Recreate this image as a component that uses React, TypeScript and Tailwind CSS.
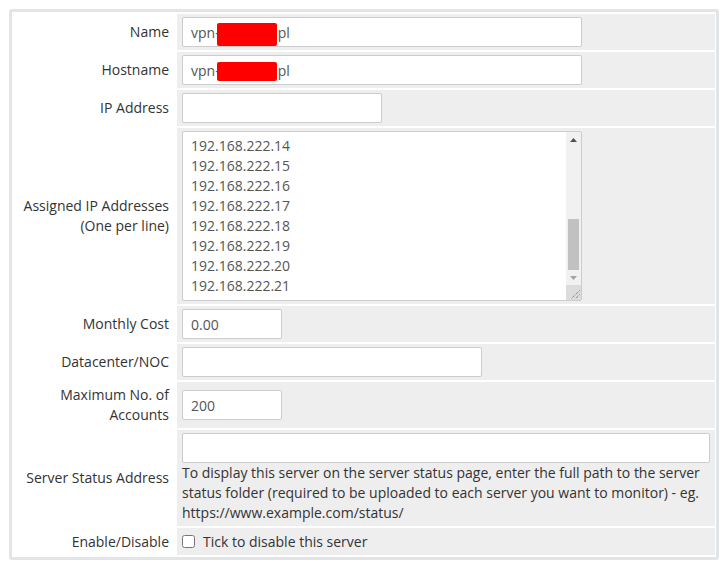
import { useLayoutEffect, useRef, type ReactNode } from "react";

const ips = Array.from({ length: 21 }, (_, i) => `192.168.222.${i + 1}`).join("\n");

const Row = ({ label, children }: { label: ReactNode; children: ReactNode }) => (
  <>
    <div className="flex items-center justify-end pr-[6px] text-right leading-[20px] text-[#333]">
      <div>{label}</div>
    </div>
    <div className="bg-[#eeeeee] px-[5px] py-[3px]">{children}</div>
  </>
);

const inputCls =
  "block h-[30px] rounded-[2px] border border-[#cccccc] bg-white px-[8px] text-[14px] text-[#555] outline-none";

const Redacted = ({ h, shift }: { h: string; shift: string }) => (
  <div className={`${inputCls} flex w-[400px] items-center`}>
    <span>vpn-</span>
    <span className={`-ml-[3px] inline-block w-[60px] rounded-[2px] bg-[#ff0000] ${h} ${shift}`} />
    <span className="ml-[1px]">pl</span>
  </div>
);

// drawn scrollbar, the headless browser hides the native one
const Scrollbar = () => (
  <div className="pointer-events-none absolute bottom-[1px] right-[1px] top-[1px] flex w-[15px] flex-col">
    <div className="flex h-[15px] items-center justify-center bg-[#f1f1f1]">
      <svg width="7" height="4" viewBox="0 0 7 4">
        <path d="M3.5 0L7 4H0z" fill="#505050" />
      </svg>
    </div>
    <div className="flex flex-1 flex-col justify-end bg-[#f1f1f1] px-[2px]">
      <div className="h-[51px] bg-[#c1c1c1]" />
    </div>
    <div className="flex h-[15px] items-center justify-center bg-[#f1f1f1]">
      <svg width="7" height="4" viewBox="0 0 7 4">
        <path d="M0 0H7L3.5 4z" fill="#a3a3a3" />
      </svg>
    </div>
    <div className="h-[15px] bg-[#dcdcdc]">
      <svg width="15" height="15" viewBox="0 0 15 15">
        <path d="M13.5 5.5L5.5 13.5M13.5 9.5L9.5 13.5" stroke="#6b6b6b" strokeWidth="1" strokeDasharray="1 1" />
      </svg>
    </div>
  </div>
);

export default function App() {
  const taRef = useRef<HTMLTextAreaElement>(null);

  useLayoutEffect(() => {
    const ta = taRef.current;
    if (ta) ta.scrollTop = ta.scrollHeight - ta.clientHeight - 2;
  }, []);

  return (
    <div className="min-h-[565px] bg-white pl-[9px] pt-[9px] font-['Open_Sans',sans-serif] text-[14px]">
      <div className="w-[710px] rounded-[3px] border-[3px] border-[#e1e5e8] bg-white px-[1px] pb-[2px] pt-[2px]">
        <div className="grid grid-cols-[162px_1fr] gap-[2px]">
          <Row label="Name">
            <Redacted h="h-[23px]" shift="translate-y-[2px]" />
          </Row>
          <Row label="Hostname">
            <Redacted h="h-[19px]" shift="translate-y-[1px]" />
          </Row>
          <Row label="IP Address">
            <input className={`${inputCls} w-[200px]`} defaultValue="" />
          </Row>
          <Row
            label={
              <>
                Assigned IP Addresses
                <br />
                (One per line)
              </>
            }
          >
            <div className="relative w-[400px]">
              <textarea
                ref={taRef}
                className="block h-[170px] w-[400px] resize-none overflow-hidden rounded-[2px] border border-[#cccccc] bg-white py-[6px] pl-[8px] pr-[20px] text-[14px] leading-[20px] text-[#555] outline-none"
                defaultValue={ips}
              />
              <Scrollbar />
            </div>
          </Row>
          <Row label="Monthly Cost">
            <input className={`${inputCls} w-[100px]`} defaultValue="0.00" />
          </Row>
          <Row label="Datacenter/NOC">
            <input className={`${inputCls} w-[300px]`} defaultValue="" />
          </Row>
          <Row
            label={
              <>
                Maximum No. of
                <br />
                Accounts
              </>
            }
          >
            <div className="flex h-[40px] items-center">
              <input className={`${inputCls} w-[100px]`} defaultValue="200" />
            </div>
          </Row>
          <Row label="Server Status Address">
            <input className={`${inputCls} w-[528px]`} defaultValue="" />
            <p className="leading-[20px] text-[#333]">
              To display this server on the server status page, enter the full path to the server status folder
              (required to be uploaded to each server you want to monitor) - eg. https://www.example.com/status/
            </p>
          </Row>
          <Row label="Enable/Disable">
            <label className="flex h-[21px] items-center text-[#333]">
              <input type="checkbox" className="m-0 mr-[8px] h-[13px] w-[13px]" />
              Tick to disable this server
            </label>
          </Row>
        </div>
      </div>
    </div>
  );
}
